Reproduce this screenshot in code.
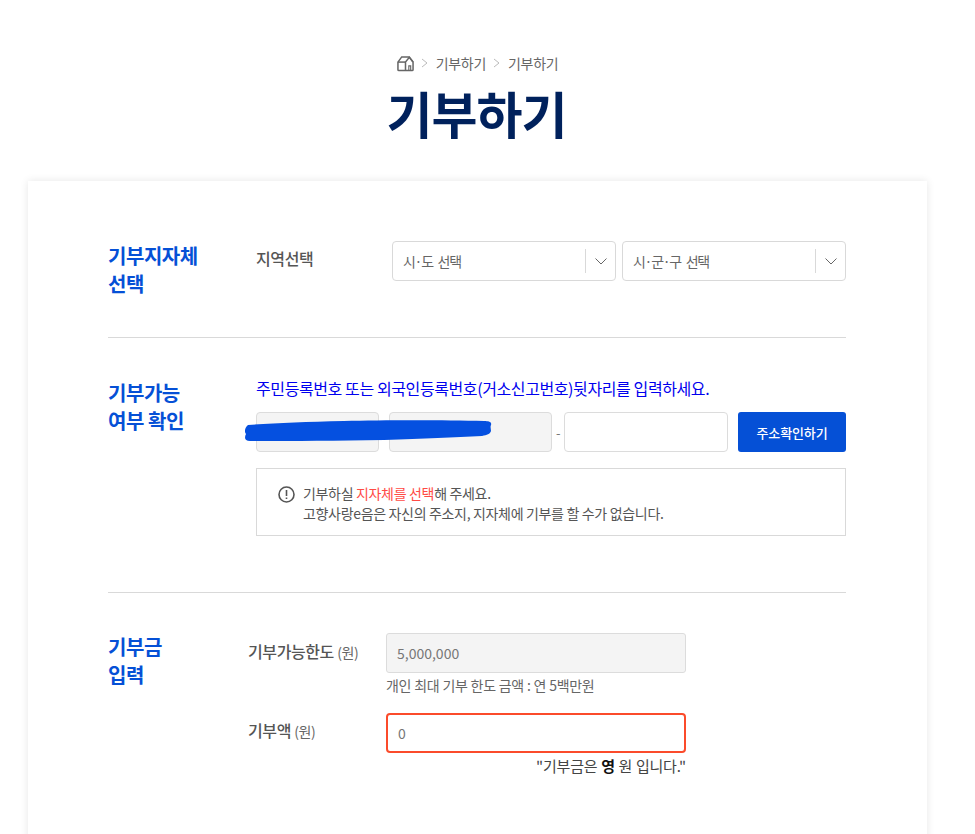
<style>
:global(body){margin:0;background:#fff;font-family:"Noto Sans CJK KR","Noto Sans",sans-serif;color:#555;letter-spacing:-0.3px}
:global(html){overflow:hidden}
.page{width:975px;height:834px;overflow:hidden}
.head{width:955px}
.crumbs{display:flex;align-items:center;justify-content:center;gap:7px;height:20px;padding-top:53px;font-size:14px;color:#666}
.home{width:17px;height:17px;display:block}
.sep{width:7px;height:10px;display:block}
.gap{margin-right:1px}
.last{margin-left:1px}
h1{margin:0;text-align:center;font-size:50px;line-height:70px;height:70px;margin-top:7px;position:relative;top:-3px;left:-1px;font-weight:700;color:#00215c;letter-spacing:-1px}
.card{margin:31px 48px 0 28px;height:800px;padding:60px 81px 0 80px;background:#fff;box-shadow:0 0 8px rgba(0,0,0,.1);box-sizing:border-box}
.section{display:flex;border-bottom:1px solid #d9d9d9}
.s1{height:96px}
.s2{padding-top:41px;height:213px}
.s3{border:0;padding-top:40px}
h2{margin:0;width:148px;flex:none;font-size:20px;line-height:28px;font-weight:700;color:#0550d6;letter-spacing:-0.45px}
.s1 h2{padding-top:1px}
.s3 h2{width:140px}
.field-label{width:136px;flex:none;font-size:16px;font-weight:500;line-height:20px;padding-top:7px;color:#555;letter-spacing:-0.4px}
.selects{display:flex;gap:6px}
.select{width:224px;height:40px;box-sizing:border-box;border:1px solid #d9d9d9;border-radius:4px;display:flex;align-items:center;font-size:14px;color:#666;padding-left:10px;letter-spacing:-1.3px;word-spacing:3px}
.select span{flex:1}
.divider{width:1px;height:24px;background:#d9d9d9;margin-right:9px}
.chev{width:12px;height:7px;margin-right:8px;display:block}
.body{flex:1;position:relative}
.notice{margin:0;color:#0000ee;font-size:16px;line-height:22px;height:35px;margin-top:-2px;letter-spacing:-0.4px}
.idrow{display:flex;align-items:center;position:relative}
.box{height:40px;box-sizing:border-box;border:1px solid #dcdcdc;border-radius:4px;background:#f4f4f4}
.a{width:123px;margin-right:10px}
.b{width:163px}
.dash{width:12px;text-align:center;font-size:13px;color:#777}
.c{width:164px;background:#fff}
.btn{margin-left:10px;width:108px;height:40px;border:0;border-radius:3px;background:#0550d6;color:#fff;font:500 13px "Noto Sans CJK KR",sans-serif;letter-spacing:-0.1px;padding:0}
.scribble{position:absolute;left:-12px;top:8px;width:248px;height:22px;display:block}
.info{margin-top:16px;height:68px;box-sizing:border-box;border:1px solid #d9d9d9;display:flex;padding:15px 0 0 21px;gap:8px;font-size:14px;line-height:19.5px;color:#555;letter-spacing:-0.33px}
.info svg{width:17px;height:17px;margin-top:2px;flex:none}
.info p{margin:0}
.red{color:#ff4b45}
.rows{flex:1}
.row{display:flex}
.row+.row{margin-top:18px}
.rl{width:138px;flex:none;font-size:16px;font-weight:500;line-height:20px;padding-top:8px;color:#555;letter-spacing:-0.4px}
.rl small{font-size:14px;font-weight:400;color:#666}
.row+.row .rl{padding-top:7px}
.col{width:300px}
.input{height:40px;box-sizing:border-box;border:1px solid #dcdcdc;border-radius:3px;background:#f4f4f4;font-size:14px;line-height:38px;padding-left:10px;color:#777;letter-spacing:0}
.err{border:2px solid #fb4b2b;background:#fff;line-height:36px;padding-left:10px;border-radius:4px}
.help{font-size:14px;line-height:20px;margin-top:2px;color:#666;word-spacing:.2px}
.say{font-size:15px;line-height:20px;text-align:right;margin-top:3px;color:#444;letter-spacing:-0.2px;word-spacing:.6px}
.say b{color:#111}
</style>

<div class="page">
  <div class="head">
    <div class="crumbs">
      <svg class="home" viewBox="0 0 18 17" fill="none" stroke="#666" stroke-width="1.6"><path d="M1 7 L5 1.5 H13 L17 7 V15 a1 1 0 0 1 -1 1 H2 a1 1 0 0 1 -1 -1 Z"/><path d="M1 7 H9"/><path d="M9 16 V7 L13 2 L17 7"/><path d="M12.5 16 V11 h2 V16" stroke-width="1.2"/></svg>
      <svg class="sep gap" viewBox="0 0 7 10" fill="none" stroke="#bbb"><path d="M1 1 L6 5 L1 9"/></svg>
      <span>기부하기</span>
      <svg class="sep" viewBox="0 0 7 10" fill="none" stroke="#bbb"><path d="M1 1 L6 5 L1 9"/></svg>
      <span class="last">기부하기</span>
    </div>
    <h1>기부하기</h1>
  </div>
  <div class="card">
    <div class="section s1">
      <h2>기부지자체<br>선택</h2>
      <div class="field-label">지역선택</div>
      <div class="selects">
        <div class="select"><span>시·도 선택</span><i class="divider"></i><svg class="chev" viewBox="0 0 12 7" fill="none" stroke="#666"><path d="M.5 .5 L6 6 L11.5 .5"/></svg></div>
        <div class="select"><span>시·군·구 선택</span><i class="divider"></i><svg class="chev" viewBox="0 0 12 7" fill="none" stroke="#666"><path d="M.5 .5 L6 6 L11.5 .5"/></svg></div>
      </div>
    </div>
    <div class="section s2">
      <h2>기부가능<br>여부 확인</h2>
      <div class="body">
        <p class="notice">주민등록번호 또는 외국인등록번호(거소신고번호)뒷자리를 입력하세요.</p>
        <div class="idrow">
          <div class="box a"></div>
          <div class="box b"></div>
          <div class="dash">-</div>
          <div class="box c"></div>
          <button class="btn">주소확인하기</button>
          <svg class="scribble" viewBox="0 0 248 22"><path d="M4 5 C30 3 60 2 100 1 C140 0 200 0 240 1 C245 1 248 2 247 5 C246 7 247 9 247 11 C246 14 243 15 238 16 C210 17 180 19 140 20 C90 21 50 21 6 21 C1 21 0 18 2 14 C0 12 1 7 4 5 Z" fill="#0550e0"/></svg>
        </div>
        <div class="info">
          <svg viewBox="0 0 17 17" fill="none" stroke="#555" stroke-width="1.6"><circle cx="8.5" cy="8.5" r="7.5"/><path d="M8.5 4 V10 M8.5 11.5 V13"/></svg>
          <p>기부하실 <span class="red">지자체를 선택</span>해 주세요.<br>고향사랑e음은 자신의 주소지, 지자체에 기부를 할 수가 없습니다.</p>
        </div>
      </div>
    </div>
    <div class="section s3">
      <h2>기부금<br>입력</h2>
      <div class="rows">
        <div class="row">
          <div class="rl">기부가능한도 <small>(원)</small></div>
          <div class="col">
            <div class="input">5,000,000</div>
            <div class="help">개인 최대 기부 한도 금액 : 연 5백만원</div>
          </div>
        </div>
        <div class="row">
          <div class="rl">기부액 <small>(원)</small></div>
          <div class="col">
            <div class="input err">0</div>
            <div class="say">"기부금은 <b>영</b> 원 입니다."</div>
          </div>
        </div>
      </div>
    </div>
  </div>
</div>
